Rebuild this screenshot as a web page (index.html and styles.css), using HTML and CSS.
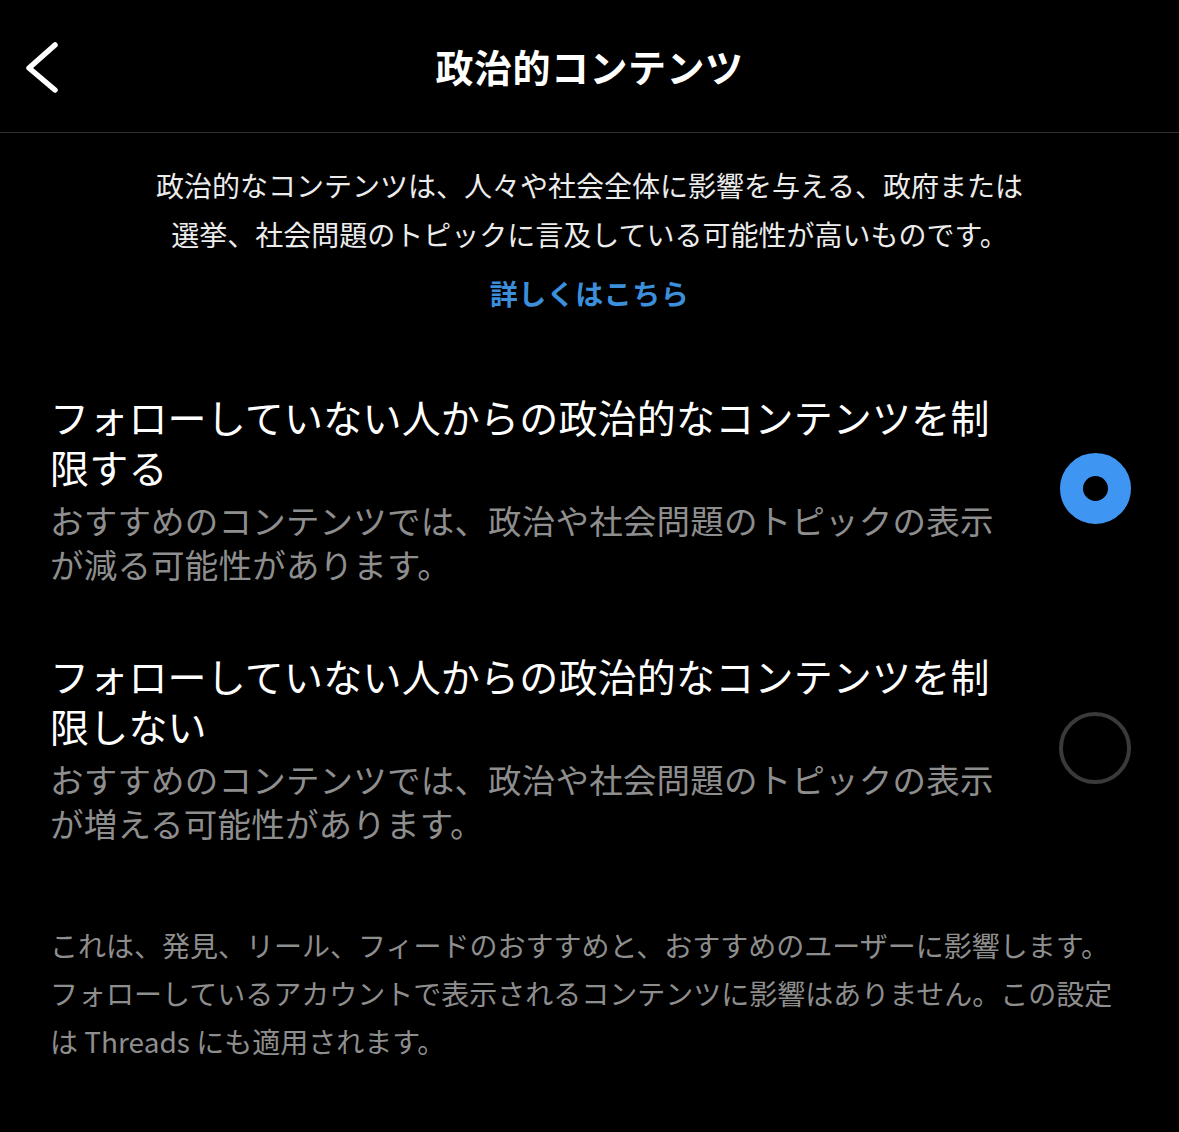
FILE: index.html
```html
<!DOCTYPE html>
<html lang="ja">
    <head>
        <meta charset="UTF-8">
        <link rel="stylesheet" href="styles.css">
    </head>
    <body>
        <div class="screen">
            <header class="topbar">
                <button class="back" aria-label="戻る">
                    <svg width="40" height="60" viewBox="0 0 40 60">
                        <path d="M33 10 L7 33 L33 55" fill="none" stroke="#fff" stroke-width="5.5" stroke-linecap="round" stroke-linejoin="round"/>
                    </svg>
                </button>
                <h1 class="title">政治的コンテンツ</h1>
            </header>

            <section class="intro">
                <p class="intro-text">政治的なコンテンツは、人々や社会全体に影響を与える、政府または<br>選挙、社会問題のトピックに言及している可能性が高いものです。</p>
                <a class="more" href="#">詳しくはこちら</a>
            </section>

            <div class="options">
                <label class="option">
                    <div class="option-text">
                        <div class="option-title">フォローしていない人からの政治的なコンテンツを制限する</div>
                        <div class="option-sub">おすすめのコンテンツでは、政治や社会問題のトピックの表示が減る可能性があります。</div>
                    </div>
                    <span class="radio checked"></span>
                </label>
                <label class="option">
                    <div class="option-text">
                        <div class="option-title">フォローしていない人からの政治的なコンテンツを制限しない</div>
                        <div class="option-sub">おすすめのコンテンツでは、政治や社会問題のトピックの表示が増える可能性があります。</div>
                    </div>
                    <span class="radio"></span>
                </label>
            </div>

            <p class="footnote">これは、発見、リール、フィードのおすすめと、おすすめのユーザーに影響します。フォローしているアカウントで表示されるコンテンツに影響はありません。この設定は Threads にも適用されます。</p>
        </div>
    </body>
</html>
```

FILE: styles.css
```css
body {
    margin: 0;
    background-color: #000;
    color: #fff;
    font-family: "Noto Sans CJK JP", "Noto Sans", sans-serif;
}

.screen {
    width: 1179px;
    height: 1132px;
    overflow: hidden;
}

.topbar {
    position: relative;
    height: 132px;
    border-bottom: 1px solid #2e2e2e;
    display: flex;
    align-items: center;
    justify-content: center;
}

.back {
    position: absolute;
    left: 22px;
    top: 35px;
    background: none;
    border: none;
    padding: 0;
    cursor: pointer;
}

.title {
    margin: 0;
    font-size: 38px;
    font-weight: bold;
    letter-spacing: 0.5px;
    margin-top: -2px;
}

.intro {
    padding-top: 28px;
    text-align: center;
}

.intro-text {
    margin: 0;
    font-size: 28px;
    line-height: 49px;
    color: #ececec;
}

.more {
    display: inline-block;
    margin-top: 14px;
    font-size: 28px;
    line-height: 40px;
    font-weight: bold;
    color: #3b8fdb;
    text-decoration: none;
    letter-spacing: 0.5px;
}

.options {
    margin-top: 78px;
    display: flex;
    flex-direction: column;
    gap: 64px;
}

.option {
    display: flex;
    align-items: center;
    padding: 0 48px 0 50px;
    cursor: pointer;
}

.option-text {
    width: 950px;
}

.option-title {
    font-size: 39px;
    line-height: 50px;
    letter-spacing: 0.2px;
    color: #fff;
}

.option-sub {
    margin-top: 7px;
    font-size: 33.5px;
    line-height: 44px;
    letter-spacing: 0.2px;
    color: #8e8e8e;
}

.radio {
    margin-left: auto;
    width: 64px;
    height: 64px;
    border-radius: 50%;
    border: 4px solid #3a3a3a;
    flex: 0 0 auto;
}

.radio.checked {
    width: 25px;
    height: 25px;
    border: 23px solid #3f96f2;
    background-color: #000;
}

.footnote {
    margin: 76px 0 0;
    padding: 0 50px;
    font-size: 28px;
    line-height: 48px;
    color: #8e8e8e;
}
```
